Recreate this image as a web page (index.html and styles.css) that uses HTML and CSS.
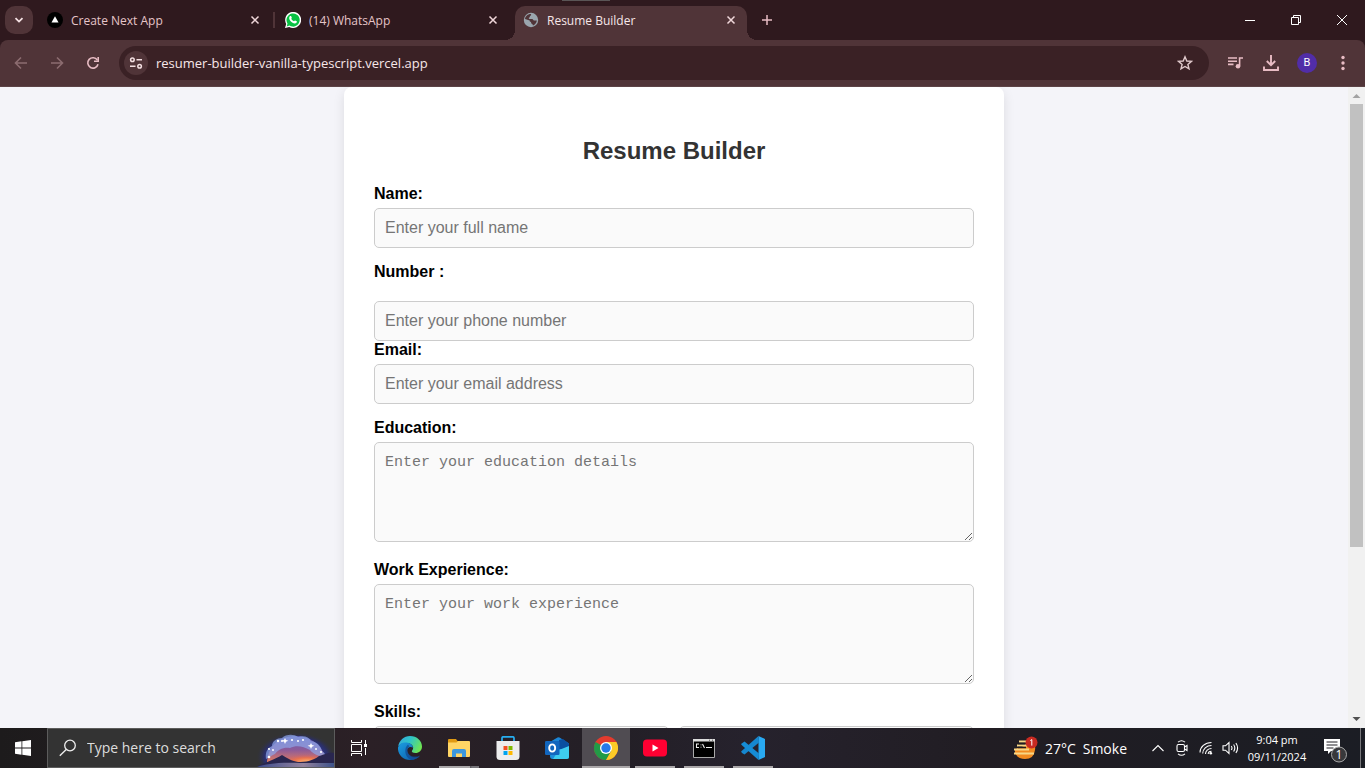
FILE: index.html
```html
<!DOCTYPE html>
<html lang="en">
<head>
<meta charset="utf-8">
<title>Resume Builder</title>
<link rel="stylesheet" href="styles.css">
</head>
<body>
<header class="tabstrip">
  <button class="tab-search" aria-label="Search tabs"><svg width="12" height="12" viewBox="0 0 12 12"><path d="M2.5 4.2 6 7.6l3.500-3.400" fill="none" stroke="#f6e3e5" stroke-width="1.800"/></svg></button>
  <nav class="tabs">
    <div class="tab tab-divided">
      <svg width="16" height="16" viewBox="0 0 16 16"><circle cx="8" cy="8" r="8" fill="#000"/><path d="M8 4.300 11.500 10.500h-7z" fill="#fff"/></svg>
      <span class="tab-title">Create Next App</span>
      <button class="tab-close" aria-label="Close tab"><svg width="10" height="10" viewBox="0 0 10 10"><path d="M1.500 1.500l7 7m0-7l-7 7"/></svg></button>
    </div>
    <div class="tab">
      <svg width="16" height="16" viewBox="0 0 16 16"><path d="M0 16 1.200 11.900A8 8 0 1 1 4.200 14.900z" fill="#fff"/><path d="M1.700 14.400 2.500 11.600A6.600 6.600 0 1 1 4.500 13.600z" fill="#08c143"/><path d="M5.200 4c.5-.2.900 0 1 .3l.6 1.400c.1.400-.5.900-.6 1.100.6 1.200 1.500 2 2.800 2.500.4-.4.800-1 1.100-.9l1.600.8c.5.300 0 1.400-.4 1.700-1 .8-2.400.6-4.200-.4C5.500 9.500 4.200 7.600 4.200 6.100c0-1 .5-1.900 1-2.100z" fill="#fff"/></svg>
      <span class="tab-title">(14) WhatsApp</span>
      <button class="tab-close" aria-label="Close tab"><svg width="10" height="10" viewBox="0 0 10 10"><path d="M1.500 1.500l7 7m0-7l-7 7"/></svg></button>
    </div>
    <div class="tab tab-active">
      <svg width="16" height="16" viewBox="0 0 16 16"><circle cx="8" cy="8" r="7.200" fill="#9aa6ae"/><path d="M7.600 2.100c1 .2.500 1.500-.5 2-.5.300.2 1.200-.8 1.400-.8.300-.7 1.500.3 1.500h2.500c1.200.2.900 1.500 2 1.600h2.700c0 2.100-1.900 4.300-3.700 4.900-.5-.3-.3-1.200-1-1.500-1-.4-1.200-.9-1-1.900-1.300-.1-1.500-.7-1.400-1.500L2 7.100C2.300 4.200 5.100 2 7.600 2.100z" fill="#503438"/><path d="M10 2.800c1.800.8 3 2.200 3.400 4l-2.500.1c-.6-.9-1.400-.8-2-1.300.2-1.400 1.500-1 1.100-2.800z" fill="#9aa6ae"/></svg>
      <span class="tab-title">Resume Builder</span>
      <button class="tab-close" aria-label="Close tab"><svg width="10" height="10" viewBox="0 0 10 10"><path d="M1.500 1.500l7 7m0-7l-7 7"/></svg></button>
    </div>
  </nav>
  <button class="new-tab" aria-label="New tab"><svg width="12" height="12" viewBox="0 0 12 12"><path d="M6 1v10M1 6h10" stroke="#e8bcc4" stroke-width="1.500"/></svg></button>
  <div class="window-controls">
    <button aria-label="Minimize"><svg width="10" height="10" viewBox="0 0 10 10"><path d="M0 5.500h10"/></svg></button>
    <button aria-label="Restore"><svg width="10" height="10" viewBox="0 0 10 10"><path d="M.5 2.500h7v7h-7zM2.500 2.500v-2h7v7h-2"/></svg></button>
    <button aria-label="Close"><svg width="10" height="10" viewBox="0 0 10 10"><path d="M0 0l10 10M10 0L0 10"/></svg></button>
  </div>
</header>

<div class="toolbar">
  <button class="tool tool-dim" aria-label="Back"><svg width="16" height="16" viewBox="0 0 16 16"><path d="M14 8H3M8 2.500 2.500 8 8 13.500"/></svg></button>
  <button class="tool tool-dim" aria-label="Forward"><svg width="16" height="16" viewBox="0 0 16 16"><path d="M2 8h11M8 2.500 13.500 8 8 13.500"/></svg></button>
  <button class="tool" aria-label="Reload"><svg width="16" height="16" viewBox="0 0 16 16"><path d="M13 9.200A5.200 5.200 0 1 1 12.300 5"/><path d="M13.200 2v4.200H9" /></svg></button>
  <div class="omnibox">
    <button class="site-info" aria-label="Site information"><svg width="14" height="14" viewBox="0 0 14 14"><g fill="none" stroke="#f3dfe1" stroke-width="1.500"><circle cx="3.400" cy="3.800" r="1.800"/><path d="M7.500 3.800H13M1 10.200h5.500"/><circle cx="10.600" cy="10.200" r="1.800"/></g></svg></button>
    <input class="url" type="text" aria-label="Address" value="resumer-builder-vanilla-typescript.vercel.app">
    <button class="star" aria-label="Bookmark"><svg width="16" height="16" viewBox="0 0 16 16"><path d="M8 1.800l1.800 4.200 4.600.4-3.500 3 1.100 4.500L8 11.500l-4 2.400 1.100-4.500-3.500-3L6.200 6z" fill="none" stroke="#e0c9cb" stroke-width="1.400"/></svg></button>
  </div>
  <button class="tool" aria-label="Media"><svg width="18" height="16" viewBox="0 0 18 16"><path d="M2 3h9M2 6.200h9M2 9.400h5.500M13.600 11V3h3.400"/><circle cx="12" cy="11.300" r="2.300" fill="#e8bcc4" stroke="none"/></svg></button>
  <button class="tool" aria-label="Downloads"><svg width="18" height="18" viewBox="0 0 18 18"><path d="M9 1v10M4.800 7 9 11.200 13.200 7M2 12.500V16h14v-3.500" stroke-width="1.900"/></svg></button>
  <button class="tool" aria-label="Profile"><span class="avatar">B</span></button>
  <button class="tool" aria-label="Menu"><svg width="16" height="16" viewBox="0 0 16 16"><g fill="#e8bcc4" stroke="none"><circle cx="8" cy="2.500" r="1.700"/><circle cx="8" cy="8" r="1.700"/><circle cx="8" cy="13.500" r="1.700"/></g></svg></button>
</div>

<div class="viewport">
  <main class="page">
    <form class="card">
      <h2 class="heading">Resume Builder</h2>
      <div class="field"><label for="name">Name:</label><input class="control" id="name" type="text" placeholder="Enter your full name"></div>
      <div class="field field-spaced"><label for="number">Number :</label><input class="control" id="number" type="tel" placeholder="Enter your phone number"></div>
      <div class="field"><label for="email">Email:</label><input class="control" id="email" type="email" placeholder="Enter your email address"></div>
      <div class="field field-area"><label for="education">Education:</label><textarea class="control area" id="education" placeholder="Enter your education details"></textarea></div>
      <div class="field field-area"><label for="work">Work Experience:</label><textarea class="control area" id="work" placeholder="Enter your work experience"></textarea></div>
      <div class="field"><label for="skill">Skills:</label><div class="pair"><input class="control" id="skill" type="text"><input class="control" type="text" aria-label="Second skill"></div></div>
    </form>
  </main>
  <div class="scrollbar">
    <svg width="17" height="17" viewBox="0 0 17 17"><path d="M4.500 11l4-4 4 4z" fill="#a3a3a3"/></svg>
    <div class="track"><div class="thumb"></div></div>
    <svg width="17" height="17" viewBox="0 0 17 17"><path d="M4.500 6l4 4 4-4z" fill="#505050"/></svg>
  </div>
</div>

<footer class="taskbar">
  <button class="task start" aria-label="Start"><svg width="16" height="16" viewBox="0 0 16 16"><path d="M0 2.200 6.500 1.300v6.200H0zM7.300 1.200 16 0v7.500H7.300zM0 8.400h6.500v6.300L0 13.800zM7.300 8.400H16V16l-8.700-1.200z" fill="#fff"/></svg></button>
  <div class="search">
    <svg width="18" height="18" viewBox="0 0 18 18"><circle cx="11" cy="6.500" r="5.300" fill="none" stroke="#eee" stroke-width="1.300"/><path d="M7.200 10.500.8 16.800" stroke="#eee" stroke-width="1.400"/></svg>
    <input type="text" aria-label="Search" placeholder="Type here to search">
    <svg class="scene" width="77" height="38" viewBox="0 0 77 38">
      <defs>
        <radialGradient id="glow" cx=".5" cy=".56" r=".5"><stop offset=".55" stop-color="#303a9c"/><stop offset=".8" stop-color="#2b2f68"/><stop offset="1" stop-color="#333" stop-opacity="0"/></radialGradient>
        <linearGradient id="dusk" x1="0" y1="0" x2="0" y2="1"><stop offset="0" stop-color="#5b5fb8"/><stop offset=".5" stop-color="#8d5b98"/><stop offset="1" stop-color="#ef8156"/></linearGradient>
        <radialGradient id="sun" cx=".6" cy=".9" r=".55"><stop offset="0" stop-color="#ffb06a"/><stop offset=".5" stop-color="#e8714f"/><stop offset="1" stop-color="#b65b7a" stop-opacity="0"/></radialGradient>
        <linearGradient id="lake"><stop offset="0" stop-color="#3b4c8e"/><stop offset=".6" stop-color="#93829d"/><stop offset="1" stop-color="#3d5289"/></linearGradient>
      </defs>
      <ellipse cx="39" cy="25" rx="40" ry="25" fill="url(#glow)"/>
      <path d="M10 32C12 17 20 9 36 7c15-1 27 7 32 20l2 8H10z" fill="url(#dusk)"/>
      <path d="M20 34V20h50v14z" fill="url(#sun)"/>
      <path d="M9 30c-1-6 1-11 6-13 0-5 5-8 10-8 4-4 12-4 16-1 6-2 11 0 13 4 6 1 10 5 11 10 3 2 4 4 3 6-5 0-12-3-15-7-7-4-14-5-20-2-7-1-12 2-15 6-3 1-5 3-9 5z" fill="#8ea6e8" opacity=".7"/>
      <path d="M1 37c8-4 14-5 24-11 7 4 10 6 16 7 7 0 15-1 21-6 7-2 10-4 15-3v15H1z" fill="#29264f"/>
      <path d="M0 38c9-3 21-5 43-4h34v4z" fill="url(#lake)"/>
      <g fill="#fff"><circle cx="12" cy="28" r="1.300"/><circle cx="12" cy="20" r="1.100"/><circle cx="16" cy="21" r="1"/><circle cx="21" cy="12" r="1.200"/><circle cx="25" cy="12" r="1"/><path d="M28 9l1 2 2.400.8-2.400.9-1 2.300-1-2.300-2.400-.9 2.400-.8zM54 14l1 2 2.400.8-2.400.9-1 2.300-1-2.300-2.400-.9 2.400-.8z"/><circle cx="35" cy="11" r="1.100"/><circle cx="41" cy="12" r="1"/><circle cx="46" cy="11" r="1.100"/><circle cx="59" cy="20" r="1"/><circle cx="64" cy="23" r="1.100"/></g>
    </svg>
  </div>
  <button class="task task-view" aria-label="Task view"><svg width="16" height="16" viewBox="0 0 16 16"><path d="M.5 0v2.500h10V0M.5 16v-2.500h10V16M.5 4.500h10v7H.5zM14.500 0v4M14.500 8v7" fill="none" stroke="#fff"/><path d="M13 4h3v3h-3z" fill="#fff"/></svg></button>
  <button class="task" aria-label="Edge"><svg width="24" height="24" viewBox="0 0 24 24"><defs><linearGradient id="e1" x1="0" y1=".2" x2="1" y2=".6"><stop offset="0" stop-color="#35a9dc"/><stop offset=".45" stop-color="#2fc4c8"/><stop offset="1" stop-color="#70e650"/></linearGradient><linearGradient id="e2" x1="0" y1="0" x2="1" y2="1"><stop offset="0" stop-color="#1b9de2"/><stop offset="1" stop-color="#0c59a4"/></linearGradient></defs><path d="M0 11C1 4.500 6 0 12 0c7 0 12 5 12 10.500 0 4-3 6.500-6.500 6.500-3 0-4.200-1.200-3.500-2.300.8-1 1.200-2 1.200-3C15 9 12 7 8.500 7 4.500 7 1 8.500 0 11z" fill="url(#e1)"/><path d="M0 11.500C1 8 4.500 6 8.500 6.500c3.500.2 6.500 2.500 6.500 5.300-1.500-1.500-4.500-1-5.500 1-1.500 4 2.500 9 7.500 8.800 2.500-.1 4-1 5-1.800C19.800 22.500 16 24 12 24 5 24-.5 18.500 0 11.500z" fill="url(#e2)"/><path d="M10 8.500C6 11.500 6 21 13 23.900c4 0 7-1.600 9-4.500-6 3-12.500 0-12.700-5 0-2.200.8-3.400 2-4z" fill="#114a93" opacity=".75"/></svg></button>
  <button class="task task-open task-stack" aria-label="File Explorer"><svg width="22" height="19" viewBox="0 0 22 19"><path d="M0 1q0-1 1-1h7l1.500 2H20v4H0z" fill="#e09a13"/><path d="M0 3.500h8.500L10 2h11q1 0 1 1v14q0 1-1 1H1q-1 0-1-1z" fill="#ffd565"/><path d="M4 18v-6q0-2 2-2h10q2 0 2 2v6h-4v-3.500H8V18z" fill="#3b97de"/></svg></button>
  <button class="task" aria-label="Store"><svg width="24" height="24" viewBox="0 0 24 24"><path d="M6 7V2q0-1.200 1.200-1.200h9.600Q18 .8 18 2v5" fill="none" stroke="#27aef0" stroke-width="1.700"/><path d="M.5 5h23v15.500q0 3.500-3.500 3.500H4Q.5 24 .5 20.500z" fill="#ededed"/><path d="M7.500 10h4v4h-4z" fill="#f25022"/><path d="M12.500 10h4v4h-4z" fill="#7fba00"/><path d="M7.500 15h4v4h-4z" fill="#00a4ef"/><path d="M12.500 15h4v4h-4z" fill="#ffb900"/></svg></button>
  <button class="task" aria-label="Outlook"><svg width="24" height="24" viewBox="0 0 24 24"><path d="M4 6.500 12.500 1.500q1-.7 2 0L24 7.500V14H4z" fill="#1b86d6"/><path d="M14 4l4-1 6 4.500V14H14z" fill="#0a4fa0"/><path d="M6 13h18v7.500q0 2.500-2.500 2.500H7.500Q5 23 5 20z" fill="#1c8fdc"/><path d="M24 10v10.500q0 2.500-2.500 2.500H8L14 14z" fill="#3ecdf0"/><rect y="5" width="14.500" height="14" rx="1.200" fill="#1266be"/><ellipse cx="7.200" cy="12" rx="3" ry="3.600" fill="none" stroke="#fff" stroke-width="1.900"/></svg></button>
  <button class="task task-current" aria-label="Chrome"><svg width="24" height="24" viewBox="0 0 24 24"><circle cx="12" cy="12" r="12" fill="#e33b2e"/><path d="M12 12 1.600 6A12 12 0 0 0 12 24l5.200-9z" fill="#229b47"/><path d="M12 6h10.400A12 12 0 0 1 12 24l5.200-9z" fill="#fccb27"/><circle cx="12" cy="12" r="6" fill="#fff"/><circle cx="12" cy="12" r="4.700" fill="#267ae9"/></svg></button>
  <button class="task task-open" aria-label="YouTube"><svg width="24" height="18" viewBox="0 0 24 18"><rect y=".5" width="24" height="17" rx="4" fill="#ff0032"/><path d="M9.500 5.500v7l6-3.500z" fill="#fff"/></svg></button>
  <button class="task task-open" aria-label="Command Prompt"><svg width="22" height="19" viewBox="0 0 22 19"><path d="M.5.500h21v18H.5z" fill="#000" stroke="#aaa"/><path d="M0 0h22v2.500H0z" fill="#ddd"/><path d="M16 1.200h1M19 1.200h1" stroke="#555"/><path d="M6 5H3.500v3.500H6M8 5.500v.8M8 7.700v.8M9.500 5l2 4M13 8.500h6" fill="none" stroke="#eee" stroke-width="1.100"/></svg></button>
  <button class="task task-open" aria-label="Visual Studio Code"><svg width="24" height="24" viewBox="0 0 24 24"><path d="M17.500 0 24 3v18l-6.500 3z" fill="#29a9f1"/><path d="M17.500 0 18 6.500 3.500 18.500 1 17l-.9-1.500z" fill="#1687cf"/><path d="M.1 8.500 1 7.200 3.500 5.500 18 17.500 17.500 24z" fill="#168dd6"/></svg></button>
  <div class="tray">
    <button class="weather"><svg width="25" height="24" viewBox="0 0 25 24"><path d="M2 13q10-2 16-9 5 4 4 10-1 9-10 9-7 0-10-6z" fill="#f28b20"/><path d="M6 5.500h9M4 9.500h12M1 13.500h15M1 17.500h20" stroke="#f7d786" stroke-width="1.900"/><path d="M5 7.500h7M5 11.500h8" stroke="#211d22" stroke-width="1.600"/><circle cx="18.500" cy="6.500" r="6" fill="#c92b22"/><path d="M17.300 4.600l1.500-1v6" fill="none" stroke="#fff"/></svg><span>27°C</span><span>Smoke</span></button>
    <button class="tray-icon" aria-label="Hidden icons"><svg width="12" height="8" viewBox="0 0 12 8"><path d="M.5 7 6 1.500 11.500 7"/></svg></button>
    <button class="tray-icon" aria-label="Meet now"><svg width="12" height="16" viewBox="0 0 12 16"><path d="M2 2.200Q5.500-.8 9 2.200M2 13.800q3.500 3 7 0"/><rect x="1" y="4.500" width="7.500" height="7" rx="1.500"/><path d="M8.500 7l2.500-1.500v5L8.500 9"/></svg></button>
    <button class="tray-icon" aria-label="Wi-Fi"><svg width="14" height="14" viewBox="0 0 14 14"><path d="M1 11.500C1 6 6 1.500 12.500 1.500M3.700 12.500C3.700 8 7.500 4.500 12.500 4.500M6.500 13c0-3 2.500-5.500 6-5.500M9.200 13c0-1.500 1.500-2.800 3.300-2.800"/><circle cx="11.800" cy="12.200" r="1.300" fill="#fff" stroke="none"/></svg></button>
    <button class="tray-icon" aria-label="Volume"><svg width="17" height="14" viewBox="0 0 17 14"><path d="M1 4.800h2.500L7 1.500v11L3.500 9.200H1zM9.300 5q1.400 2 0 4M11.600 3.500q2.400 3.500 0 7M13.900 2q3.400 5 0 10"/></svg></button>
    <button class="clock"><span>9:04 pm</span><span>09/11/2024</span></button>
    <button class="notice" aria-label="Notifications"><svg width="25" height="26" viewBox="0 0 25 26"><path d="M1 2h16v12h-9l-3 3v-3H1z" fill="#fff"/><path d="M3.500 5h11M3.500 8h11M3.500 11h7" stroke="#211f25"/><circle cx="16" cy="17.500" r="7.500" fill="#38383b" stroke="#aaa"/></svg><span class="notice-count">1</span></button>
    <div class="show-desktop"></div>
  </div>
</footer>
</body>
</html>
```

FILE: styles.css
```css
* { box-sizing: border-box; }

body {
  margin: 0;
  height: 100vh;
  display: flex;
  flex-direction: column;
  overflow: hidden;
  font-family: "Open Sans", "Noto Sans", sans-serif;
  background: #2f191e;
}

button {
  display: flex;
  align-items: center;
  justify-content: center;
  flex: none;
  padding: 0;
  border: 0;
  background: none;
  color: inherit;
  font: inherit;
}

svg { flex: none; display: block; }

/* Tab strip */
.tabstrip {
  position: relative;
  flex: none;
  height: 40px;
  display: flex;
  align-items: flex-start;
  padding-left: 5px;
  background: #2f191e;
}
.tabstrip::before {
  content: "";
  position: absolute;
  top: 0;
  left: 562px;
  width: 48px;
  height: 1px;
  background: #5a5556;
}
.tab-search {
  width: 28px;
  height: 28px;
  margin: 6px 6px 0 0;
  border-radius: 10px;
  background: #503438;
}
.tabs { display: flex; gap: 6px; padding-top: 6px; }
.tab {
  position: relative;
  width: 232px;
  height: 34px;
  display: flex;
  align-items: center;
  gap: 8px;
  padding: 0 8px 6px;
  color: #e6c5c9;
  font-size: 12px;
}
.tab-divided::after {
  content: "";
  position: absolute;
  right: -4px;
  top: 6px;
  width: 2px;
  height: 16px;
  background: #503438;
}
.tab-active { background: #503438; border-radius: 10px 10px 0 0; color: #f6e6e8; }
.tab-active::before,
.tab-active::after {
  content: "";
  position: absolute;
  bottom: 0;
  width: 10px;
  height: 10px;
}
.tab-active::before { left: -10px; background: radial-gradient(circle at 0 0, transparent 10px, #503438 10px); }
.tab-active::after { right: -10px; background: radial-gradient(circle at 100% 0, transparent 10px, #503438 10px); }
.tab-title { flex: 1; white-space: nowrap; }
.tab-close { width: 16px; height: 16px; stroke: #f0d7da; stroke-width: 1.5; }
.new-tab { width: 28px; height: 28px; margin: 6px 0 0 6px; }
.window-controls { display: flex; margin-left: auto; }
.window-controls button { width: 46px; height: 40px; fill: none; stroke: #fff; }

/* Toolbar */
.toolbar {
  flex: none;
  height: 47px;
  display: flex;
  align-items: center;
  padding: 0 4px 0 3px;
  background: #503438;
  border-bottom: 1px solid #5c4346;
  border-radius: 8px 8px 0 0;
}
.tool { width: 36px; height: 34px; fill: none; stroke: #e8bcc4; stroke-width: 1.6; }
.tool-dim { stroke: #8c6c70; }
.omnibox {
  flex: 1;
  height: 34px;
  display: flex;
  align-items: center;
  margin: 0 8px;
  padding: 0 12px 0 5px;
  border-radius: 17px;
  background: #3a2125;
}
.site-info { width: 24px; height: 24px; border-radius: 50%; background: #503438; }
.url {
  flex: 1;
  min-width: 0;
  padding: 0 8px;
  border: 0;
  background: none;
  color: #f7e7e9;
  font: 13px/20px "Open Sans", "Noto Sans", sans-serif;
}
.star { width: 24px; height: 24px; }
.avatar {
  width: 20px;
  height: 20px;
  border-radius: 50%;
  background: #512da8;
  color: #fff;
  font: 11px/20px Roboto, sans-serif;
}

/* Web page */
.viewport { flex: 1; min-height: 0; display: flex; background: #f4f4f9; }
.page { flex: 1; min-width: 0; overflow: hidden; }
.card {
  max-width: 660px;
  margin: 0 auto;
  padding: 30px;
  border-radius: 8px;
  background: #fff;
  box-shadow: 0 4px 12px rgba(0, 0, 0, 0.1);
  font-family: "Liberation Sans", Arial, sans-serif;
  font-size: 16px;
}
.heading { margin: 20px 0; color: #333; font-size: 24px; line-height: 28px; text-align: center; }
.field { display: flex; flex-direction: column; gap: 5px; margin-bottom: 15px; color: #000; }
.field label { font-weight: bold; line-height: 18px; }
.field-spaced { gap: 20px; margin-bottom: 0; }
.field-area { margin-bottom: 19px; }
.control {
  width: 100%;
  height: 40px;
  padding: 10px;
  border: 1px solid #ccc;
  border-radius: 5px;
  background: #fafafa;
  font: 16px/18px "Liberation Sans", Arial, sans-serif;
}
.control::placeholder { color: #757575; }
.area {
  height: 100px;
  resize: vertical;
  font: 15px/20px Consolas, "Liberation Mono", monospace;
}
.pair { display: grid; grid-template-columns: 1fr 1fr; gap: 10px; }

.scrollbar { flex: none; width: 17px; display: flex; flex-direction: column; background: #f1f1f1; }
.track { flex: 1; padding: 0 2px; }
.thumb { height: 73%; background: #c1c1c1; }

/* Taskbar */
.taskbar {
  flex: none;
  height: 40px;
  display: flex;
  gap: 1px;
  background: linear-gradient(90deg, #1d1b1c, #2b2026 27%, #231f26 45%, #26222d 55%, #211d23 72%, #1b1d24);
  color: #fff;
}
.task { position: relative; width: 48px; height: 40px; }
.start { width: 46px; }
.task-view { margin: 0 2px 0 -1px; }
.task-open::after,
.task-current::after {
  content: "";
  position: absolute;
  bottom: 0;
  left: 4px;
  right: 4px;
  height: 2px;
  background: #aaa7a9;
}
.task-current { background: #504c52; }
.task-current::after { left: 0; right: 0; }
.task-stack::after { background: linear-gradient(90deg, #aaa7a9 31px, #55545a 31px, #77757a 33px); }
.search {
  flex: none;
  width: 288px;
  display: flex;
  align-items: center;
  padding-left: 11px;
  border: 1px solid #5c5c5c;
  background: #333;
}
.search input {
  flex: 1;
  min-width: 0;
  padding: 0 0 0 10px;
  border: 0;
  background: none;
  color: #ddd;
  font: 14px/20px "Open Sans", "Noto Sans", sans-serif;
}
.search input::placeholder { color: #ddd; }
.tray { display: flex; align-items: center; margin-left: auto; font-size: 14px; }
.weather { gap: 7px; margin-right: 19px; }
.tray-icon { width: 24px; height: 40px; fill: none; stroke: #fff; stroke-width: 1.1; }
.clock { flex-direction: column; width: 70px; font-size: 11px; line-height: 17px; }
.notice { position: relative; width: 48px; height: 40px; padding: 4px 2px 0 0; }
.notice-count { position: absolute; left: 23px; top: 19px; width: 8px; font-size: 12px; line-height: 16px; text-align: center; }
.show-desktop { width: 5px; height: 40px; border-left: 1px solid #77777b; }
```
